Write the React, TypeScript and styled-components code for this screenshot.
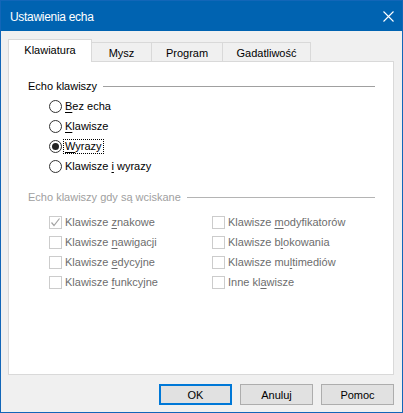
import React from 'react';
import styled, { createGlobalStyle, css } from 'styled-components';

const GlobalStyle = createGlobalStyle`
  html, body {
    margin: 0;
    padding: 0;
    background: #f0f0f0;
  }
  body {
    font-family: 'Liberation Sans', Arial, sans-serif;
    font-size: 11px;
    color: #000;
  }
`;

const Window = styled.div`
  box-sizing: border-box;
  width: 403px;
  height: 413px;
  border: 1px solid #1266b8;
  background: #f0f0f0;
  display: flex;
  flex-direction: column;
`;

const TitleBar = styled.header`
  height: 29px;
  background: #0063b1;
  color: #fff;
  display: flex;
  align-items: center;
  padding: 1px 0 0 9px;
  font-size: 12px;
  letter-spacing: -0.3px;
`;

const Title = styled.span`
  flex: 1;
`;

const CloseButton = styled.div`
  width: 46px;
  height: 29px;
  display: flex;
  align-items: center;
  justify-content: center;
  margin-right: -9px;
`;

const Body = styled.div`
  flex: 1;
  display: flex;
  flex-direction: column;
  padding: 8px 8px 0 7px;
`;

const TabStrip = styled.div`
  display: flex;
  align-items: flex-end;
  height: 22px;
  position: relative;
  z-index: 1;
`;

const Tab = styled.div<{ $active?: boolean; $w: number }>`
  box-sizing: border-box;
  width: ${p => p.$w}px;
  display: flex;
  align-items: center;
  justify-content: center;
  border: 1px solid #d9d9d9;
  border-bottom: none;
  margin-left: -1px;
  ${p =>
    p.$active
      ? css`
          height: 23px;
          margin-left: 0;
          margin-bottom: -1px;
          background: #fff;
          padding-bottom: 2px;
        `
      : css`
          height: 19px;
          background: #f0f0f0;
          padding-top: 1px;
        `}
`;

const Panel = styled.div`
  box-sizing: border-box;
  width: 386px;
  height: 314px;
  border: 1px solid #d9d9d9;
  background: #fff;
  padding: 17px 18px 0 19px;
`;

const GroupHeader = styled.div<{ $disabled?: boolean }>`
  display: flex;
  align-items: center;
  height: 14px;
  color: ${p => (p.$disabled ? '#a0a0a0' : '#000')};

  &::after {
    content: '';
    flex: 1;
    margin-left: 6px;
    border-top: 1px solid ${p => (p.$disabled ? '#b4b4b4' : '#a0a0a0')};
  }
`;

const RadioList = styled.div`
  display: flex;
  flex-direction: column;
  padding-left: 21px;
  margin: 3px 0 14px;
`;

const Row = styled.label`
  display: flex;
  align-items: center;
  height: 20px;
`;

const RadioCircle = styled.span<{ $checked?: boolean }>`
  box-sizing: border-box;
  width: 13px;
  height: 13px;
  border-radius: 50%;
  border: 1px solid #333;
  background: #fff;
  display: flex;
  align-items: center;
  justify-content: center;
  margin-right: 1px;

  &::after {
    content: '';
    width: 7px;
    height: 7px;
    border-radius: 50%;
    background: ${p => (p.$checked ? '#222' : 'transparent')};
  }
`;

const Label = styled.span<{ $focused?: boolean; $disabled?: boolean }>`
  padding: 0 1px;
  line-height: 13px;
  border: 1px dotted ${p => (p.$focused ? '#000' : 'transparent')};
  color: ${p => (p.$disabled ? '#6d6d6d' : '#000')};
`;

const CheckGrid = styled.div`
  display: grid;
  grid-template-columns: 163px 1fr;
  padding-left: 21px;
  margin-top: 8px;
  row-gap: 0.33px;
`;

const CheckBox = styled.span`
  box-sizing: border-box;
  width: 13px;
  height: 13px;
  border: 1px solid #cccccc;
  background: #fff;
  display: flex;
  align-items: center;
  justify-content: center;
  margin-right: 1px;
`;

const ButtonRow = styled.div`
  display: flex;
  justify-content: flex-end;
  gap: 8px;
  margin-top: 9px;
`;

const Button = styled.button<{ $default?: boolean }>`
  box-sizing: border-box;
  width: 73px;
  height: 21px;
  font: inherit;
  color: #000;
  background: #e1e1e1;
  border: 1px solid #adadad;
  padding: 0;
  ${p =>
    p.$default &&
    css`
      border: 2px solid #0078d7;
    `}
`;

const Key = styled.u`
  text-decoration-thickness: 1px;
  text-underline-offset: 2px;
`;

function withKey(text: string, key: number) {
  return (
    <>
      {text.slice(0, key)}
      <Key>{text[key]}</Key>
      {text.slice(key + 1)}
    </>
  );
}

const radios: { text: string; key: number; checked?: boolean }[] = [
  { text: 'Bez echa', key: 0 },
  { text: 'Klawisze', key: 0 },
  { text: 'Wyrazy', key: 0, checked: true },
  { text: 'Klawisze i wyrazy', key: 9 }
];

const checks: { text: string; key: number; checked?: boolean }[] = [
  { text: 'Klawisze znakowe', key: 9, checked: true },
  { text: 'Klawisze modyfikatorów', key: 9 },
  { text: 'Klawisze nawigacji', key: 9 },
  { text: 'Klawisze blokowania', key: 10 },
  { text: 'Klawisze edycyjne', key: 9 },
  { text: 'Klawisze multimediów', key: 11 },
  { text: 'Klawisze funkcyjne', key: 9 },
  { text: 'Inne klawisze', key: 7 }
];

export default function App() {
  return (
    <>
      <GlobalStyle />
      <Window>
        <TitleBar>
          <Title>Ustawienia echa</Title>
          <CloseButton>
            <svg width="11" height="11" viewBox="0 0 11 11">
              <path d="M0.5 0.5 L10.5 10.5 M10.5 0.5 L0.5 10.5" stroke="#fff" strokeWidth="1.1" />
            </svg>
          </CloseButton>
        </TitleBar>
        <Body>
          <TabStrip>
            <Tab $active $w={84}>Klawiatura</Tab>
            <Tab $w={61}>Mysz</Tab>
            <Tab $w={72}>Program</Tab>
            <Tab $w={89}>Gadatliwość</Tab>
          </TabStrip>
          <Panel>
            <GroupHeader>Echo klawiszy</GroupHeader>
            <RadioList>
              {radios.map(r => (
                <Row key={r.text}>
                  <RadioCircle $checked={r.checked} />
                  <Label $focused={r.checked}>{withKey(r.text, r.key)}</Label>
                </Row>
              ))}
            </RadioList>
            <GroupHeader $disabled>Echo klawiszy gdy są wciskane</GroupHeader>
            <CheckGrid>
              {checks.map(c => (
                <Row key={c.text}>
                  <CheckBox>
                    {c.checked && (
                      <svg width="11" height="11" viewBox="0 0 11 11">
                        <path d="M1.5 5.5 L4 8.5 L9.5 1.5" fill="none" stroke="#a3a3a3" strokeWidth="1.2" />
                      </svg>
                    )}
                  </CheckBox>
                  <Label $disabled>{withKey(c.text, c.key)}</Label>
                </Row>
              ))}
            </CheckGrid>
          </Panel>
          <ButtonRow>
            <Button $default>OK</Button>
            <Button>Anuluj</Button>
            <Button>Pomoc</Button>
          </ButtonRow>
        </Body>
      </Window>
    </>
  );
}
